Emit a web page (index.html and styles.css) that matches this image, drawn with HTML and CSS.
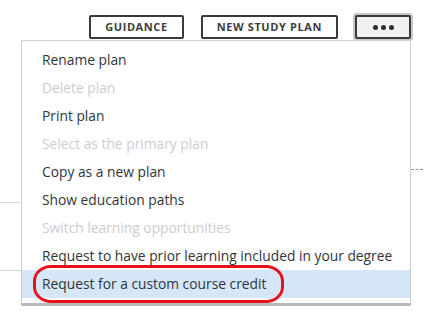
FILE: index.html
```html
<!DOCTYPE html>
<html lang="en">
<head>
<meta charset="utf-8">
<title>Study plan menu</title>
<link rel="stylesheet" href="styles.css">
</head>
<body>
<div class="page">
  <div class="toolbar">
    <button class="btn">GUIDANCE</button>
    <button class="btn">NEW STUDY PLAN</button>
    <div class="more-wrap">
      <button class="btn btn-more" aria-label="More"><span class="dot"></span><span class="dot"></span><span class="dot"></span></button>
      <ul class="menu">
        <li class="item">Rename plan</li>
        <li class="item disabled">Delete plan</li>
        <li class="item">Print plan</li>
        <li class="item disabled">Select as the primary plan</li>
        <li class="item">Copy as a new plan</li>
        <li class="item">Show education paths</li>
        <li class="item disabled">Switch learning opportunities</li>
        <li class="item">Request to have prior learning included in your degree</li>
        <li class="item active">Request for a custom course credit<span class="mark"></span></li>
      </ul>
    </div>
  </div>
  <div class="content">
    <div class="rule rule-a"></div>
    <div class="rule rule-b"></div>
    <div class="rule rule-c"></div>
  </div>
</div>
</body>
</html>
```
FILE: styles.css
```css
* { box-sizing: border-box; }
html, body { margin: 0; padding: 0; background: #fff; }
body { font-family: "Open Sans", "Noto Sans", sans-serif; color: #333; }
.page { width: 437px; height: 315px; overflow: hidden; }
.toolbar {
  display: flex;
  justify-content: flex-end;
  gap: 17px;
  padding: 15px 26px 0 0;
  height: 40px;
}
.btn {
  height: 24px;
  padding: 0 14px;
  border: 2px solid #3a3a3a;
  border-radius: 2px;
  background: #fff;
  font-family: "Open Sans", sans-serif;
  font-weight: 700;
  font-size: 11px;
  letter-spacing: 0.6px;
  color: #3d3d3d;
  line-height: 20px;
}
.more-wrap { position: relative; }
.btn-more {
  width: 56px;
  display: flex;
  align-items: center;
  justify-content: center;
  gap: 3px;
  background: #f1f1f1;
  box-shadow: 0 0 0 2px #c8c8c8;
}
.dot { width: 5px; height: 5px; border-radius: 50%; background: #2d2d2d; }
.menu {
  position: absolute;
  right: 0;
  top: 25px;
  width: 390px;
  margin: 0;
  padding: 5px 0 5px;
  list-style: none;
  background: #fff;
  border: 1px solid #cfcfcf;
  border-bottom: 3px solid #b9b9b9;
  z-index: 2;
}
.item {
  position: relative;
  height: 28px;
  line-height: 28px;
  padding-left: 20px;
  font-size: 13.8px;
  color: #30353a;
  white-space: nowrap;
}
.item.disabled { color: #cdcdcd; }
.item.active { background: #d5e6f8; }
.mark {
  position: absolute;
  left: 11px;
  top: -5px;
  width: 251px;
  height: 38px;
  border: 3.5px solid #e5121b;
  border-radius: 18px / 16px;
}
.content { position: relative; height: 275px; }
.rule { position: absolute; }
.rule-a { left: 0; width: 22px; top: 162px; border-top: 1px solid #d6d6d6; }
.rule-b { left: 0; width: 22px; top: 230px; border-top: 1px solid #d6d6d6; }
.rule-c { left: 411px; width: 12px; top: 129px; border-top: 1px dashed #9a9a9a; }
```
